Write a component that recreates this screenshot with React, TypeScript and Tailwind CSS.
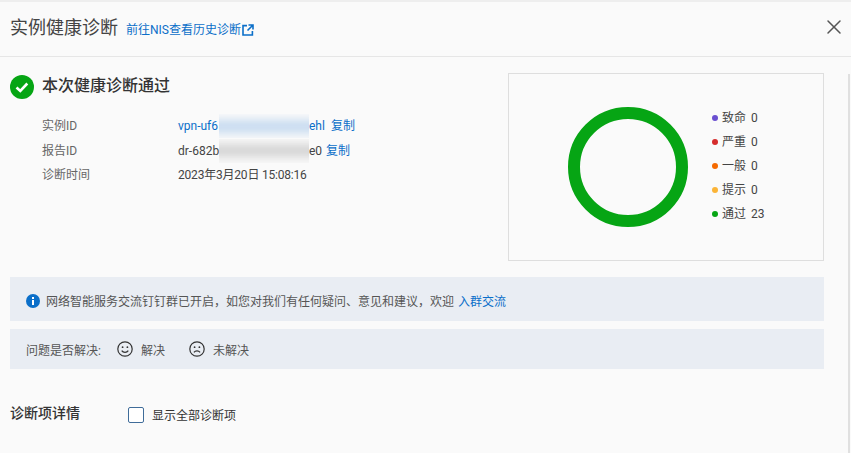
import { X } from "lucide-react";

const FONT = "font-['Roboto','Noto_Sans_CJK_SC',sans-serif]";

const LEGEND = [
  { label: "致命", value: 0, color: "bg-[#6a4fd0]" },
  { label: "严重", value: 0, color: "bg-[#d62d2d]" },
  { label: "一般", value: 0, color: "bg-[#f56a00]" },
  { label: "提示", value: 0, color: "bg-[#fbb437]" },
  { label: "通过", value: 23, color: "bg-[#06a514]" },
];

function Redacted({ tint, before, after }: { tint: string; before: string; after: string }) {
  return (
    <span className="flex items-center">
      <span className="w-[41px] whitespace-nowrap">{before}</span>
      <span className="h-[24px] w-[90px] overflow-hidden flex items-center">
        <span className={`block h-[13px] w-[110px] ml-[-10px] shrink-0 blur-[5px] ${tint}`} />
      </span>
      <span className="whitespace-nowrap">{after}</span>
    </span>
  );
}

function Face({ sad }: { sad?: boolean }) {
  return (
    <svg width="16" height="16" viewBox="0 0 16 16" fill="none" stroke="#333" strokeWidth="1.2">
      <circle cx="8" cy="8" r="7.2" />
      <circle cx="5.6" cy="6.2" r="0.9" fill="#333" stroke="none" />
      <circle cx="10.4" cy="6.2" r="0.9" fill="#333" stroke="none" />
      {sad ? <path d="M4.9 11.3c1.6-2 4.6-2 6.2 0" /> : <path d="M4.7 9.6c1.5 2.3 5.1 2.3 6.6 0" />}
    </svg>
  );
}

export default function App() {
  return (
    <div className={`${FONT} relative h-[453px] w-[851px] overflow-hidden bg-[#fafafa] text-[#333]`}>
      <div className="h-[2px] bg-[#eeeeee]" />

      <div className="flex h-[55px] items-center border-b border-[#e6e6e6] pl-[10px] pr-[5px] pb-[4px]">
        <span className="mt-[2px] text-[18px] leading-[26px] text-[#444]">实例健康诊断</span>
        <a className="ml-[8px] mt-[5px] flex items-center text-[12px] text-[#0b6fc9]">
          前往NIS查看历史诊断
          <svg className="ml-[1px]" width="12" height="12" viewBox="0 0 12 12" fill="none" stroke="#0b6fc9" strokeWidth="1.6">
            <path d="M5 1.6H1v9.4h9.400V7" />
            <path d="M6.500 1h4.500v4.500M11 1 5.500 6.500" />
          </svg>
        </a>
        <X className="ml-auto h-[24px] w-[24px] text-[#555]" strokeWidth={1.5} />
      </div>

      <div className="flex pl-[10px] pr-[27px] pt-[16px]">
        <div className="flex-1">
          <div className="flex h-[28px] items-center">
            <span className="flex h-[24px] w-[24px] items-center justify-center rounded-full bg-[#06a514]">
              <svg width="14" height="11" viewBox="0 0 14 11" fill="none" stroke="#fff" strokeWidth="2.600">
                <path d="M1.500 5.500 5.300 9l7-7.500" />
              </svg>
            </span>
            <span className="ml-[8px] mt-[-2px] text-[16px] font-medium leading-[24px] text-[#333]">本次健康诊断通过</span>
          </div>

          <div className="mt-[13px] ml-[32px] grid grid-cols-[136px_1fr] auto-rows-[24.500px] items-center text-[12px] text-[#444]">
            <span className="text-[#666]">实例ID</span>
            <span className="flex items-center text-[#0b6fc9]">
              <Redacted tint="bg-[#c6daf0]" before="vpn-uf6" after="ehl" />
              <a className="ml-[6px]">复制</a>
            </span>
            <span className="text-[#666]">报告ID</span>
            <span className="flex items-center">
              <Redacted tint="bg-[#d4d4d4]" before="dr-682b" after="e0" />
              <a className="ml-[4px] text-[#0b6fc9]">复制</a>
            </span>
            <span className="text-[#666]">诊断时间</span>
            <span className="tracking-[-0.2px]">2023年3月20日 15:08:16</span>
          </div>
        </div>

        <div className="flex h-[188px] w-[316px] items-center border border-[#dedede] pl-[59px]">
          <svg width="120" height="120" viewBox="0 0 120 120">
            <circle cx="60" cy="60" r="54" fill="none" stroke="#06a514" strokeWidth="12" />
          </svg>
          <div className="ml-[24px] mt-[-2px] flex flex-col text-[12px] text-[#444]">
            {LEGEND.map((l) => (
              <div key={l.label} className="flex h-[24px] items-center">
                <span className={`h-[6px] w-[6px] rounded-full ${l.color}`} />
                <span className="ml-[4px]">{l.label}</span>
                <span className="ml-[5px]">{l.value}</span>
              </div>
            ))}
          </div>
        </div>
      </div>

      <div className="mx-[10px] mr-[27px] mt-[16px] flex h-[44px] items-center bg-[#e9edf3] pl-[16px] text-[12px] text-[#555]">
        <svg className="mt-[4px]" width="14" height="14" viewBox="0 0 14 14">
          <circle cx="7" cy="7" r="7" fill="#0b6fc9" />
          <rect x="6" y="6" width="2" height="5" fill="#fff" />
          <rect x="6" y="3" width="2" height="2" fill="#fff" />
        </svg>
        <span className="ml-[6px] mt-[5px]">网络智能服务交流钉钉群已开启，如您对我们有任何疑问、意见和建议，欢迎</span>
        <a className="ml-[4px] mt-[5px] text-[#0b6fc9]">入群交流</a>
      </div>

      <div className="mx-[10px] mr-[27px] mt-[8px] flex h-[40px] items-center bg-[#e9edf3] pl-[16px] text-[12px] text-[#555]">
        <span className="mt-[3px]">问题是否解决:</span>
        <span className="ml-[16px] flex items-center">
          <Face />
          <span className="ml-[8px] mt-[3px]">解决</span>
        </span>
        <span className="ml-[24px] flex items-center">
          <Face sad />
          <span className="ml-[8px] mt-[3px]">未解决</span>
        </span>
      </div>

      <div className="mt-[34px] flex items-start pl-[10px]">
        <span className="text-[14px] font-medium leading-[20px] text-[#333]">诊断项详情</span>
        <span className="ml-[48px] mt-[4px] h-[16px] w-[16px] rounded-[2px] border border-[#3f6c99] bg-white" />
        <span className="ml-[8px] mt-[3px] text-[12px] leading-[20px] text-[#333]">显示全部诊断项</span>
      </div>

      <div className="absolute right-[1px] top-[74px] h-[379px] w-[2px] bg-[#e0e0e0]" />
    </div>
  );
}
